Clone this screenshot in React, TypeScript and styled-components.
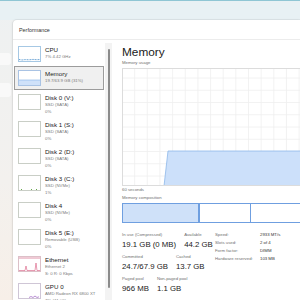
import React from 'react'
import styled, { createGlobalStyle } from 'styled-components'

const GlobalStyle = createGlobalStyle`
    html, body {
        margin: 0;
        padding: 0;
    }
    body {
        font-family: 'Liberation Sans', Arial, sans-serif;
        color: #1a1a1a;
    }
`

const Page = styled.div`
    width: 300px;
    height: 300px;
    overflow: hidden;
    display: flex;
    flex-direction: column;
    background: linear-gradient(180deg, #eef1f2 0%, #f3f1ee 60%, #f7efe8 100%);
`

const TopBand = styled.div`
    height: 19px;
    flex: none;
    background: #e8f1f4;
    border-top: 1px solid #8fc6d4;
`

const Desk = styled.div`
    flex: 1;
    display: flex;
    min-height: 0;
`

const Strip = styled.div`
    width: 13px;
    flex: none;
    display: flex;
    flex-direction: column;
    gap: 18px;
    padding-top: 33px;
`

const StripCard = styled.div<{ $h: number }>`
    height: ${p => p.$h}px;
    margin-right: 2px;
    border-radius: 0 3px 3px 0;
    background: rgba(255, 255, 255, 0.6);
`

const Window = styled.div`
    flex: 1;
    min-width: 0;
    background: #fff;
    border-top-left-radius: 4px;
    box-shadow: 0 0 0 1px rgba(0, 0, 0, 0.05), -1px 0 3px rgba(0, 0, 0, 0.05);
    display: flex;
    flex-direction: column;
    overflow: hidden;
`

const TitleBar = styled.div`
    height: 19px;
    flex: none;
    border-bottom: 1px solid #ececec;
    padding-left: 6px;
    display: flex;
    align-items: center;
    font-size: 5.4px;
    color: #333;
`

const Body = styled.div`
    flex: 1;
    display: flex;
    min-height: 0;
`

const Sidebar = styled.div`
    width: 92px;
    flex: none;
    box-sizing: border-box;
    padding: 2px 1px 0 1px;
    display: flex;
    flex-direction: column;
`

const Item = styled.div<{ $tall?: boolean; $selected?: boolean }>`
    height: ${p => (p.$tall ? 27 : 24)}px;
    flex: none;
    box-sizing: border-box;
    display: flex;
    gap: 4px;
    padding: 3px;
    border: 1px solid ${p => (p.$selected ? '#9c9c9c' : 'transparent')};
    background: ${p => (p.$selected ? '#f0f0f0' : 'transparent')};
`

const Thumb = styled.div<{ $border: string }>`
    width: 23px;
    height: 16px;
    flex: none;
    box-sizing: border-box;
    border: 1px solid ${p => p.$border};
    background: #fff;
    svg {
        display: block;
    }
`

const ItemText = styled.div`
    display: flex;
    flex-direction: column;
    white-space: nowrap;
`

const ItemName = styled.div`
    font-size: 6.2px;
    line-height: 8px;
    color: #1a1a1a;
`

const ItemSub = styled.div`
    font-size: 4.3px;
    line-height: 6.5px;
    color: #7a7a7a;
`

const Gutter = styled.div`
    width: 7px;
    flex: none;
    margin-top: 3px;
    background: #f3f3f3;
    display: flex;
    justify-content: center;
`

const ScrollThumb = styled.div`
    width: 2px;
    height: 239px;
    margin-top: 6px;
    border-radius: 1px;
    background: #8b8b8b;
`

const Main = styled.div`
    flex: 1;
    min-width: 0;
    padding-left: 10px;
    overflow: hidden;
    display: flex;
    flex-direction: column;
`

const Heading = styled.div`
    margin-top: 5px;
    font-size: 11.8px;
    line-height: 14px;
    color: #1a1a1a;
`

const Caption = styled.div<{ $gap: number }>`
    margin-top: ${p => p.$gap}px;
    font-size: 4.3px;
    line-height: 6px;
    color: #6f6f6f;
    white-space: nowrap;
`

const Chart = styled.div`
    margin-top: 2px;
    width: 200px;
    height: 118px;
    flex: none;
    svg {
        display: block;
    }
`

const CompBar = styled.div`
    margin-top: 2px;
    width: 220px;
    height: 20px;
    flex: none;
    box-sizing: border-box;
    border: 1px solid #6f9fe0;
    display: flex;
`

const Segment = styled.div<{ $w?: number; $fill?: string; $last?: boolean }>`
    width: ${p => (p.$w !== undefined ? `${p.$w}px` : 'auto')};
    flex: ${p => (p.$w !== undefined ? 'none' : '1')};
    background: ${p => p.$fill || '#fff'};
    border-right: ${p => (p.$last ? 'none' : '1px solid #6f9fe0')};
`

const Stats = styled.div`
    margin-top: 9px;
    display: flex;
`

const StatColumn = styled.div`
    width: 93px;
    flex: none;
    display: flex;
    flex-direction: column;
    gap: 4px;
`

const StatRow = styled.div`
    display: flex;
    gap: 8px;
`

const Stat = styled.div`
    display: flex;
    flex-direction: column;
    gap: 2px;
    white-space: nowrap;
`

const StatLabel = styled.div`
    font-size: 4.3px;
    line-height: 6px;
    color: #707070;
`

const StatValue = styled.div`
    font-size: 7.8px;
    line-height: 10px;
    color: #1a1a1a;
`

const Info = styled.div`
    display: grid;
    grid-template-columns: 45px auto;
    align-content: start;
    margin-top: -1px;
    font-size: 4.3px;
    line-height: 8px;
    white-space: nowrap;
`

const InfoLabel = styled.div`
    color: #707070;
`

const InfoValue = styled.div`
    color: #333;
`

type Device = {
    name: string
    lines: string[]
    border: string
    graph?: React.ReactNode
    selected?: boolean
}

const cpuGraph = (
    <svg width="21" height="14" viewBox="0 0 21 14">
        <polyline points="0,12.5 3,13 6,12.6 10,12.8 14,12.4 18,12.7 21,12.5" fill="none" stroke="#3c86c6" strokeWidth="0.8" strokeDasharray="1 0.6" />
    </svg>
)

const memGraph = (
    <svg width="21" height="14" viewBox="0 0 21 14">
        <rect x="0" y="9" width="21" height="5" fill="#cfe1f9" />
        <line x1="0" y1="9" x2="21" y2="9" stroke="#7faee6" strokeWidth="0.6" />
    </svg>
)

const diskGraph = (
    <svg width="21" height="14" viewBox="0 0 21 14">
        <rect x="2" y="13" width="1" height="1" fill="#6aa84f" />
        <rect x="12" y="13" width="1" height="1" fill="#6aa84f" />
        <rect x="17" y="13" width="1" height="1" fill="#6aa84f" />
    </svg>
)

const netGraph = (
    <svg width="21" height="14" viewBox="0 0 21 14">
        <line x1="0" y1="1" x2="21" y2="1" stroke="#d87a95" strokeWidth="0.8" />
        <polyline points="0,13.5 6,13.5 7,9 8,13.5 16,13.5 17,6 18,13.5 21,13.5" fill="none" stroke="#d6577d" strokeWidth="0.6" />
    </svg>
)

const gpuGraph = (
    <svg width="21" height="14" viewBox="0 0 21 14">
        <polyline points="10,13.5 12,12.5 14,13.5 16,12 18,13.5 20,12.8" fill="none" stroke="#9b5fc0" strokeWidth="0.7" />
    </svg>
)

const devices: Device[] = [
    { name: 'CPU', lines: ['7% 4.42 GHz'], border: '#a6c8e4', graph: cpuGraph },
    { name: 'Memory', lines: ['19.7/63.9 GB (31%)'], border: '#a9c3e4', graph: memGraph, selected: true },
    { name: 'Disk 0 (V:)', lines: ['SSD (SATA)', '0%'], border: '#c9cec6' },
    { name: 'Disk 1 (S:)', lines: ['SSD (SATA)', '0%'], border: '#c9cec6' },
    { name: 'Disk 2 (D:)', lines: ['SSD (SATA)', '0%'], border: '#c9cec6' },
    { name: 'Disk 3 (C:)', lines: ['SSD (NVMe)', '1%'], border: '#c9cec6', graph: diskGraph },
    { name: 'Disk 4', lines: ['SSD (NVMe)', '0%'], border: '#c9cec6' },
    { name: 'Disk 5 (E:)', lines: ['Removable (USB)', '0%'], border: '#c9cec6' },
    { name: 'Ethernet', lines: ['Ethernet 2', 'S: 0 R: 0 Kbps'], border: '#dcc0c8', graph: netGraph },
    { name: 'GPU 0', lines: ['AMD Radeon RX 6800 XT', '7% (41 °C)'], border: '#cfc6d6', graph: gpuGraph },
]

const gridX = Array.from({ length: 16 }, (_, i) => (i + 1) * 12.65)
const gridY = Array.from({ length: 9 }, (_, i) => 10 + i * 12.25)

const UsageChart: React.FC = () => (
    <svg width="200" height="118" viewBox="0 0 200 118">
        {gridX.map(x => (
            <line key={`x${x}`} x1={x} y1="0" x2={x} y2="118" stroke="#efefef" strokeWidth="0.8" />
        ))}
        {gridY.map(y => (
            <line key={`y${y}`} x1="0" y1={y} x2="200" y2={y} stroke="#efefef" strokeWidth="0.8" />
        ))}
        <polygon points="42,118 46,83 200,83 200,118" fill="#cce0fa" />
        <polyline points="42,118 46,83 200,83" fill="none" stroke="#8db7ea" strokeWidth="0.8" />
        <rect x="0.5" y="0.5" width="199" height="117" fill="none" stroke="#dcdcdc" strokeWidth="1" />
    </svg>
)

export default function App() {
    return (
        <>
            <GlobalStyle />
            <Page>
                <TopBand />
                <Desk>
                    <Strip>
                        <StripCard $h={12} />
                        <StripCard $h={14} />
                    </Strip>
                    <Window>
                        <TitleBar>Performance</TitleBar>
                        <Body>
                            <Sidebar>
                                {devices.map(d => (
                                    <Item key={d.name} $tall={d.lines.length > 1} $selected={d.selected}>
                                        <Thumb $border={d.border}>{d.graph}</Thumb>
                                        <ItemText>
                                            <ItemName>{d.name}</ItemName>
                                            {d.lines.map(l => (
                                                <ItemSub key={l}>{l}</ItemSub>
                                            ))}
                                        </ItemText>
                                    </Item>
                                ))}
                            </Sidebar>
                            <Gutter>
                                <ScrollThumb />
                            </Gutter>
                            <Main>
                                <Heading>Memory</Heading>
                                <Caption $gap={1}>Memory usage</Caption>
                                <Chart>
                                    <UsageChart />
                                </Chart>
                                <Caption $gap={1}>60 seconds</Caption>
                                <Caption $gap={2}>Memory composition</Caption>
                                <CompBar>
                                    <Segment $w={75} $fill="#cfe1f9" />
                                    <Segment $w={0} />
                                    <Segment $w={50} />
                                    <Segment $last />
                                </CompBar>
                                <Stats>
                                    <StatColumn>
                                        <StatRow>
                                            <Stat>
                                                <StatLabel>In use (Compressed)</StatLabel>
                                                <StatValue>19.1 GB (0 MB)</StatValue>
                                            </Stat>
                                            <Stat>
                                                <StatLabel>Available</StatLabel>
                                                <StatValue>44.2 GB</StatValue>
                                            </Stat>
                                        </StatRow>
                                        <StatRow>
                                            <Stat>
                                                <StatLabel>Committed</StatLabel>
                                                <StatValue>24.7/67.9 GB</StatValue>
                                            </Stat>
                                            <Stat>
                                                <StatLabel>Cached</StatLabel>
                                                <StatValue>13.7 GB</StatValue>
                                            </Stat>
                                        </StatRow>
                                        <StatRow>
                                            <Stat>
                                                <StatLabel>Paged pool</StatLabel>
                                                <StatValue>966 MB</StatValue>
                                            </Stat>
                                            <Stat>
                                                <StatLabel>Non-paged pool</StatLabel>
                                                <StatValue>1.1 GB</StatValue>
                                            </Stat>
                                        </StatRow>
                                    </StatColumn>
                                    <Info>
                                        <InfoLabel>Speed:</InfoLabel>
                                        <InfoValue>2933 MT/s</InfoValue>
                                        <InfoLabel>Slots used:</InfoLabel>
                                        <InfoValue>2 of 4</InfoValue>
                                        <InfoLabel>Form factor:</InfoLabel>
                                        <InfoValue>DIMM</InfoValue>
                                        <InfoLabel>Hardware reserved:</InfoLabel>
                                        <InfoValue>103 MB</InfoValue>
                                    </Info>
                                </Stats>
                            </Main>
                        </Body>
                    </Window>
                </Desk>
            </Page>
        </>
    )
}
